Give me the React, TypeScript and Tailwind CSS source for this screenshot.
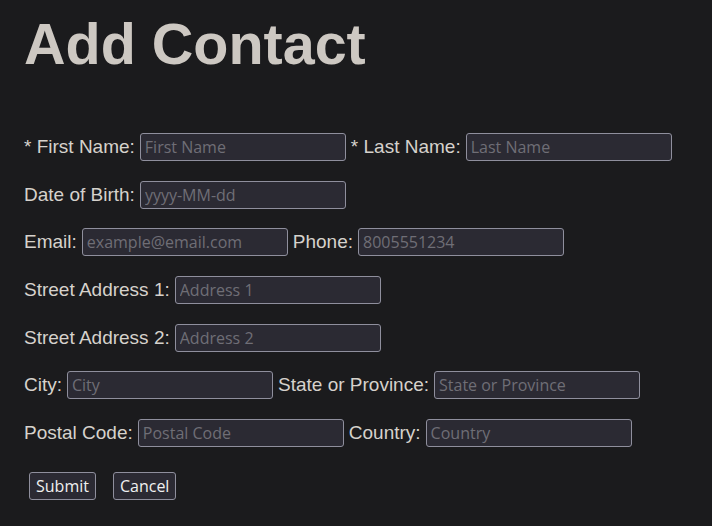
const Field = ({ label, placeholder }: { label: string; placeholder: string }) => (
  <>
    <label>{label}</label>
    <input
      type="text"
      placeholder={placeholder}
      className="w-[206px] h-[28px] px-[4px] rounded-[3px] border border-[#8f8f9d] bg-[#2b2a33] text-[16px] text-[#e0e0e0] placeholder:text-[#6f6e76] outline-none font-['Open_Sans',sans-serif]"
    />
  </>
);

const Row = ({ children }: { children: React.ReactNode }) => (
  <div className="flex items-center gap-[5px] h-[28px]">{children}</div>
);

export default function App() {
  return (
    <div className="min-h-[526px] bg-[#1b1b1d] text-[#d6d2cc] font-['Liberation_Sans',Arial,sans-serif] px-[24px] pt-[11px]">
      <h1 className="text-[57.5px] font-bold leading-[1.15] text-[#cdc8c2]">Add Contact</h1>
      <form className="mt-[56px] flex flex-col gap-[19.67px] text-[19px]">
        <Row>
          <Field label="* First Name:" placeholder="First Name" />
          <Field label="* Last Name:" placeholder="Last Name" />
        </Row>
        <Row>
          <Field label="Date of Birth:" placeholder="yyyy-MM-dd" />
        </Row>
        <Row>
          <Field label="Email:" placeholder="example@email.com" />
          <Field label="Phone:" placeholder="8005551234" />
        </Row>
        <Row>
          <Field label="Street Address 1:" placeholder="Address 1" />
        </Row>
        <Row>
          <Field label="Street Address 2:" placeholder="Address 2" />
        </Row>
        <Row>
          <Field label="City:" placeholder="City" />
          <Field label="State or Province:" placeholder="State or Province" />
        </Row>
        <Row>
          <Field label="Postal Code:" placeholder="Postal Code" />
          <Field label="Country:" placeholder="Country" />
        </Row>
        <div className="flex gap-[17px] pl-[5px] mt-[5px] font-['Open_Sans',sans-serif] text-[16px]">
          <button type="submit" className="h-[28px] px-[6px] rounded-[3px] border border-[#8f8f9d] bg-[#2b2a33] text-[#f0f0f0]">
            Submit
          </button>
          <button type="button" className="h-[28px] px-[6px] rounded-[3px] border border-[#8f8f9d] bg-[#2b2a33] text-[#f0f0f0]">
            Cancel
          </button>
        </div>
      </form>
    </div>
  );
}
